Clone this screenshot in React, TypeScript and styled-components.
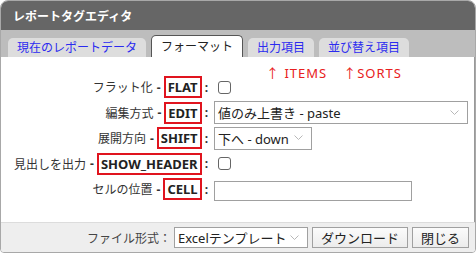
import styled, { createGlobalStyle } from "styled-components"

const GlobalStyle = createGlobalStyle`
  html, body {
    margin: 0;
    padding: 0;
    background: #ffffff;
  }
  body {
    font-family: "Noto Sans", "Noto Sans CJK JP", sans-serif;
    font-size: 12px;
    color: #333;
  }
`

const Dialog = styled.div`
  width: 476px;
  height: 253px;
  box-sizing: border-box;
  border: 1px solid #a8a8a8;
  border-radius: 8px 8px 4px 4px;
  overflow: hidden;
  display: flex;
  flex-direction: column;
  background: #fff;
`

const TitleBar = styled.div`
  height: 29px;
  flex: none;
  background: #666666;
  color: #ffffff;
  font-weight: bold;
  font-size: 12px;
  display: flex;
  align-items: center;
  padding-left: 12px;
`

const TabStrip = styled.div`
  height: 27px;
  flex: none;
  background: #bdbdbd;
  display: flex;
  align-items: flex-end;
  gap: 5px;
  padding-left: 7px;
`

const Tab = styled.div<{ $active?: boolean }>`
  box-sizing: border-box;
  height: ${(p) => (p.$active ? "22px" : "19px")};
  padding: 1px 9px 0;
  display: flex;
  align-items: center;
  border-radius: 5px 5px 0 0;
  background: ${(p) => (p.$active ? "#ffffff" : "#dddddd")};
  color: ${(p) => (p.$active ? "#222222" : "#2b2bf0")};
  border: ${(p) => (p.$active ? "1px solid #555" : "none")};
  border-bottom: none;
  font-size: 12px;
  line-height: 1;
`

const Content = styled.div`
  flex: 1;
  background: #ffffff;
  padding-top: 12px;
  border-right: 1px solid #999;
`

const Hint = styled.div`
  display: flex;
  gap: 16px;
  padding-left: 265px;
  height: 8px;
  line-height: 8px;
  font-size: 13px;
  color: #e82020;
  letter-spacing: 1px;
  margin-bottom: -1px;
`

const Form = styled.div`
  display: grid;
  grid-template-columns: 213px 1fr;
  grid-auto-rows: 22px;
  row-gap: 3.5px;
`

const LabelCell = styled.div`
  display: flex;
  justify-content: flex-end;
  align-items: center;
  color: #333;
`

const Dash = styled.span`
  font-weight: bold;
  margin: 0 3px 0 4px;
`

const KeyBox = styled.span`
  box-sizing: border-box;
  height: 22px;
  border: 2px solid #e0141e;
  padding: 0 2px;
  display: flex;
  align-items: center;
  font-weight: bold;
  font-size: 13px;
  color: #222;
`

const Colon = styled.span`
  font-weight: bold;
  margin: 0 6px 0 3px;
`

const ControlCell = styled.div`
  display: flex;
  align-items: center;
`

const CheckBox = styled.span`
  box-sizing: border-box;
  width: 13px;
  height: 13px;
  margin-left: 4px;
  border: 1px solid #666;
  border-radius: 3px;
  background: #fff;
`

const Select = styled.div<{ $width: number; $height?: number }>`
  box-sizing: border-box;
  width: ${(p) => p.$width}px;
  height: ${(p) => p.$height ?? 23}px;
  border: 1px solid #a0a0a0;
  background: #fff;
  display: flex;
  align-items: center;
  justify-content: space-between;
  padding: 0 8px 0 3px;
  color: #222;
  font-size: 13px;
  white-space: nowrap;
`

const TextInput = styled.div`
  box-sizing: border-box;
  width: 198px;
  height: 20px;
  margin-top: 3px;
  border: 1px solid #a0a0a0;
  background: #fff;
`

const Footer = styled.div`
  height: 30px;
  flex: none;
  box-sizing: border-box;
  background: #eeeeee;
  border-top: 1px solid #dcdcdc;
  display: flex;
  align-items: center;
  justify-content: flex-end;
  padding-right: 6px;
`

const FooterLabel = styled.span`
  color: #444;
  margin-right: 3px;
`

const Button = styled.div<{ $width: number }>`
  box-sizing: border-box;
  width: ${(p) => p.$width}px;
  height: 21px;
  margin-left: 4px;
  border: 1px solid #a0a0a0;
  background: linear-gradient(#fbfbfb, #ececec);
  display: flex;
  align-items: center;
  justify-content: center;
  color: #222;
  font-size: 13px;
`

const Chevron = () => (
  <svg width="9" height="6" viewBox="0 0 9 6">
    <polyline points="0.5,0.5 4.5,4.5 8.5,0.5" fill="none" stroke="#b8b8b8" strokeWidth="1" />
  </svg>
)

type RowProps = {
  label: string
  tag: string
  children: React.ReactNode
}

const Row = ({ label, tag, children }: RowProps) => (
  <>
    <LabelCell>
      <span>{label}</span>
      <Dash>-</Dash>
      <KeyBox>{tag}</KeyBox>
      <Colon>:</Colon>
    </LabelCell>
    <ControlCell>{children}</ControlCell>
  </>
)

export default function App() {
  return (
    <>
      <GlobalStyle />
      <Dialog>
        <TitleBar>レポートタグエディタ</TitleBar>
        <TabStrip>
          <Tab>現在のレポートデータ</Tab>
          <Tab $active>フォーマット</Tab>
          <Tab>出力項目</Tab>
          <Tab>並び替え項目</Tab>
        </TabStrip>
        <Content>
          <Hint>
            <span>↑ ITEMS</span>
            <span>↑SORTS</span>
          </Hint>
          <Form>
            <Row label="フラット化" tag="FLAT">
              <CheckBox />
            </Row>
            <Row label="編集方式" tag="EDIT">
              <Select $width={254}>
                値のみ上書き - paste
                <Chevron />
              </Select>
            </Row>
            <Row label="展開方向" tag="SHIFT">
              <Select $width={98}>
                下へ - down
                <Chevron />
              </Select>
            </Row>
            <Row label="見出しを出力" tag="SHOW_HEADER">
              <CheckBox />
            </Row>
            <Row label="セルの位置" tag="CELL">
              <TextInput />
            </Row>
          </Form>
        </Content>
        <Footer>
          <FooterLabel>ファイル形式：</FooterLabel>
          <Select $width={134} $height={21}>
            Excelテンプレート
            <Chevron />
          </Select>
          <Button $width={96}>ダウンロード</Button>
          <Button $width={57}>閉じる</Button>
        </Footer>
      </Dialog>
    </>
  )
}
